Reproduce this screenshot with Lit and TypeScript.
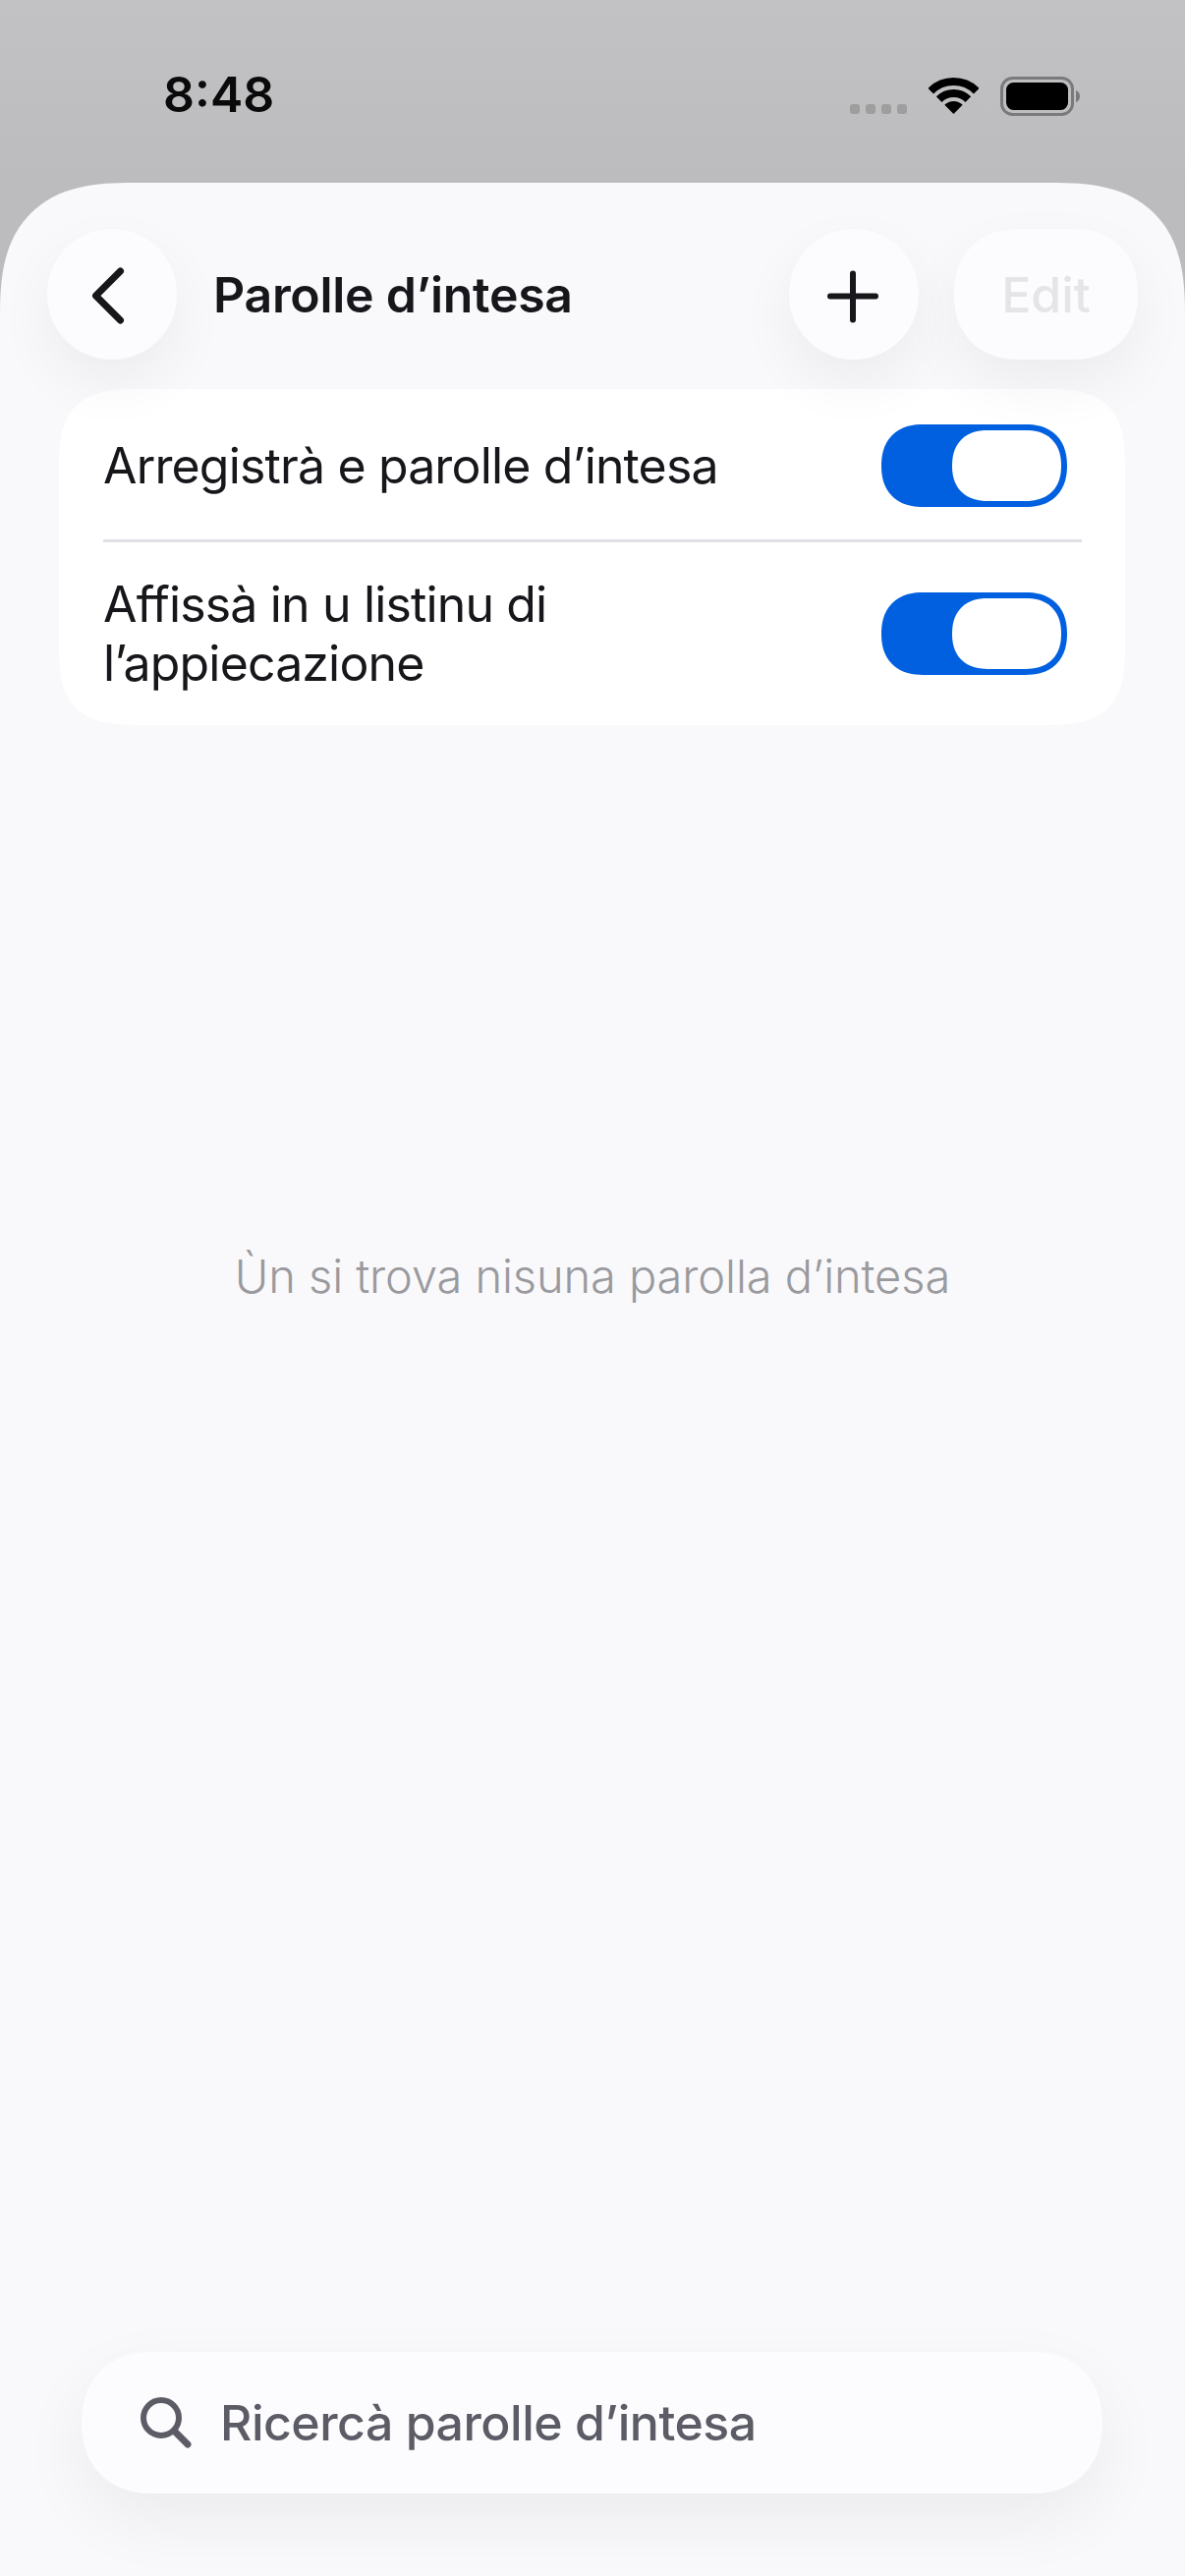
import { LitElement, html, css } from "lit";
import { customElement } from "lit/decorators.js";

@customElement("app-root")
export class AppRoot extends LitElement {
  static styles = css`
    :host {
      display: block;
      width: 1206px;
      height: 2622px;
      overflow: hidden;
      font-family: Inter, "Liberation Sans", sans-serif;
      background: linear-gradient(#c2c2c4, #bcbcbe 186px);
    }
    .status {
      height: 186px;
      box-sizing: border-box;
      padding: 66px 106px 0 166px;
      display: flex;
      align-items: flex-start;
    }
    .time {
      font-size: 50px;
      line-height: 60px;
      font-weight: 600;
      color: #0a0a0a;
      flex: 1;
    }
    .dots {
      display: flex;
      gap: 6px;
      margin-top: 40px;
      margin-right: 22px;
    }
    .dots i {
      width: 10px;
      height: 10px;
      border-radius: 3px;
      background: #9e9e9f;
    }
    .wifi {
      width: 51px;
      height: 37px;
      margin-top: 13px;
      margin-right: 22px;
      display: block;
    }
    .battery {
      width: 82px;
      height: 40px;
      margin-top: 12px;
      display: block;
    }
    .sheet {
      height: 2436px;
      box-sizing: border-box;
      background: #f9f9fb;
      border-radius: 135px 135px 0 0;
      corner-shape: superellipse(1.4);
      overflow: hidden;
      display: flex;
      flex-direction: column;
    }
    .header {
      position: relative;
      z-index: 1;
      display: flex;
      align-items: center;
      padding: 47px 48px 0;
    }
    .round {
      height: 133px;
      min-width: 132px;
      border-radius: 66px;
      background: #fcfcfe;
      box-shadow: 0 24px 60px rgba(0, 0, 0, 0.055);
      display: flex;
      align-items: center;
      justify-content: center;
      flex: none;
    }
    .round svg {
      display: block;
    }
    .title {
      flex: 1;
      margin-left: 37px;
      font-size: 50px;
      line-height: 60px;
      font-weight: 600;
      color: #17171b;
      letter-spacing: -0.3px;
    }
    .edit {
      width: 187px;
      margin-left: 36px;
      font-size: 50px;
      font-weight: 500;
      color: #e5e5e8;
      corner-shape: superellipse(1.15);
    }
    .card {
      margin: 30px 61px 0 60px;
      background: #fff;
      border-radius: 80px;
      corner-shape: superellipse(1.5);
    }
    .row {
      display: flex;
      align-items: center;
      padding: 0 59px 0 45px;
    }
    .row.first {
      padding-top: 36px;
      padding-bottom: 33px;
    }
    .row.second {
      padding-top: 33px;
      padding-bottom: 33px;
    }
    .label {
      flex: 1;
      padding-right: 60px;
      font-size: 50px;
      line-height: 60px;
      color: #17171b;
      letter-spacing: -0.85px;
    }
    .divider {
      height: 3px;
      margin: 0 44px 0 45px;
      background: #e0e0e6;
    }
    .toggle {
      width: 189px;
      height: 84px;
      box-sizing: border-box;
      padding: 6px;
      border-radius: 42px;
      background: #0060e0;
      display: flex;
      justify-content: flex-end;
      flex: none;
      corner-shape: superellipse(1.2);
    }
    .toggle i {
      width: 111px;
      height: 72px;
      border-radius: 36px;
      background: #fff;
      corner-shape: superellipse(1.2);
    }
    .empty {
      flex: 1;
      padding-top: 526px;
      text-align: center;
      font-size: 47px;
      line-height: 70px;
      font-weight: 350;
      color: #9a9a9e;
      letter-spacing: -0.1px;
    }
    .search {
      margin: 0 84px 84px 83px;
      height: 144px;
      box-sizing: border-box;
      padding-left: 60px;
      border-radius: 72px;
      background: #fcfcfe;
      box-shadow: 0 26px 70px rgba(0, 0, 0, 0.06);
      display: flex;
      align-items: center;
      corner-shape: superellipse(1.15);
    }
    .search svg {
      display: block;
      flex: none;
    }
    .search span {
      margin-left: 29px;
      font-size: 50px;
      line-height: 60px;
      font-weight: 450;
      color: #5c5c66;
      letter-spacing: -0.5px;
    }
  `;

  private toggle() {
    return html`<div class="toggle"><i></i></div>`;
  }

  render() {
    return html`
      <div class="status">
        <div class="time">8:48</div>
        <div class="dots"><i></i><i></i><i></i><i></i></div>
        <svg class="wifi" viewBox="0 0 51 37" fill="none">
          <path d="M2.2 13.7A33 33 0 0 1 48.8 13.7" stroke="#000" stroke-width="8" />
          <path d="M10.65 22.15A21 21 0 0 1 40.35 22.15" stroke="#000" stroke-width="8" />
          <path d="M25.5 37L16.3 27.8A13 13 0 0 1 34.7 27.8Z" fill="#000" />
        </svg>
        <svg class="battery" viewBox="0 0 82 40" fill="none">
          <rect x="1.5" y="1.5" width="72" height="37" rx="11" stroke="#7a7a7c" stroke-width="3" />
          <rect x="6" y="6" width="63" height="28" rx="7.5" fill="#000" />
          <path d="M77 14C80 15 81 17.5 81 20C81 22.5 80 25 77 26Z" fill="#7a7a7c" />
        </svg>
      </div>
      <div class="sheet">
        <div class="header">
          <div class="round">
            <svg width="40" height="64" viewBox="0 0 40 64" fill="none">
              <path d="M28.5 8L3.5 33L28.5 58" stroke="#17171b" stroke-width="7" stroke-linecap="round" stroke-linejoin="round" />
            </svg>
          </div>
          <div class="title">Parolle d’intesa</div>
          <div class="round">
            <svg width="60" height="60" viewBox="0 0 60 60" fill="none">
              <path d="M29 8.5V55.5M6 31.5H52" stroke="#17171b" stroke-width="6" stroke-linecap="round" />
            </svg>
          </div>
          <div class="round edit">Edit</div>
        </div>
        <div class="card">
          <div class="row first">
            <div class="label">Arregistrà e parolle d’intesa</div>
            ${this.toggle()}
          </div>
          <div class="divider"></div>
          <div class="row second">
            <div class="label">Affissà in u listinu di l’appiecazione</div>
            ${this.toggle()}
          </div>
        </div>
        <div class="empty">Ùn si trova nisuna parolla d’intesa</div>
        <div class="search">
          <svg width="52" height="52" viewBox="0 0 52 52" fill="none">
            <circle cx="21" cy="21" r="18" stroke="#5c5c66" stroke-width="6" />
            <path d="M35 35L48 48" stroke="#5c5c66" stroke-width="7" stroke-linecap="round" />
          </svg>
          <span>Ricercà parolle d’intesa</span>
        </div>
      </div>
    `;
  }
}
